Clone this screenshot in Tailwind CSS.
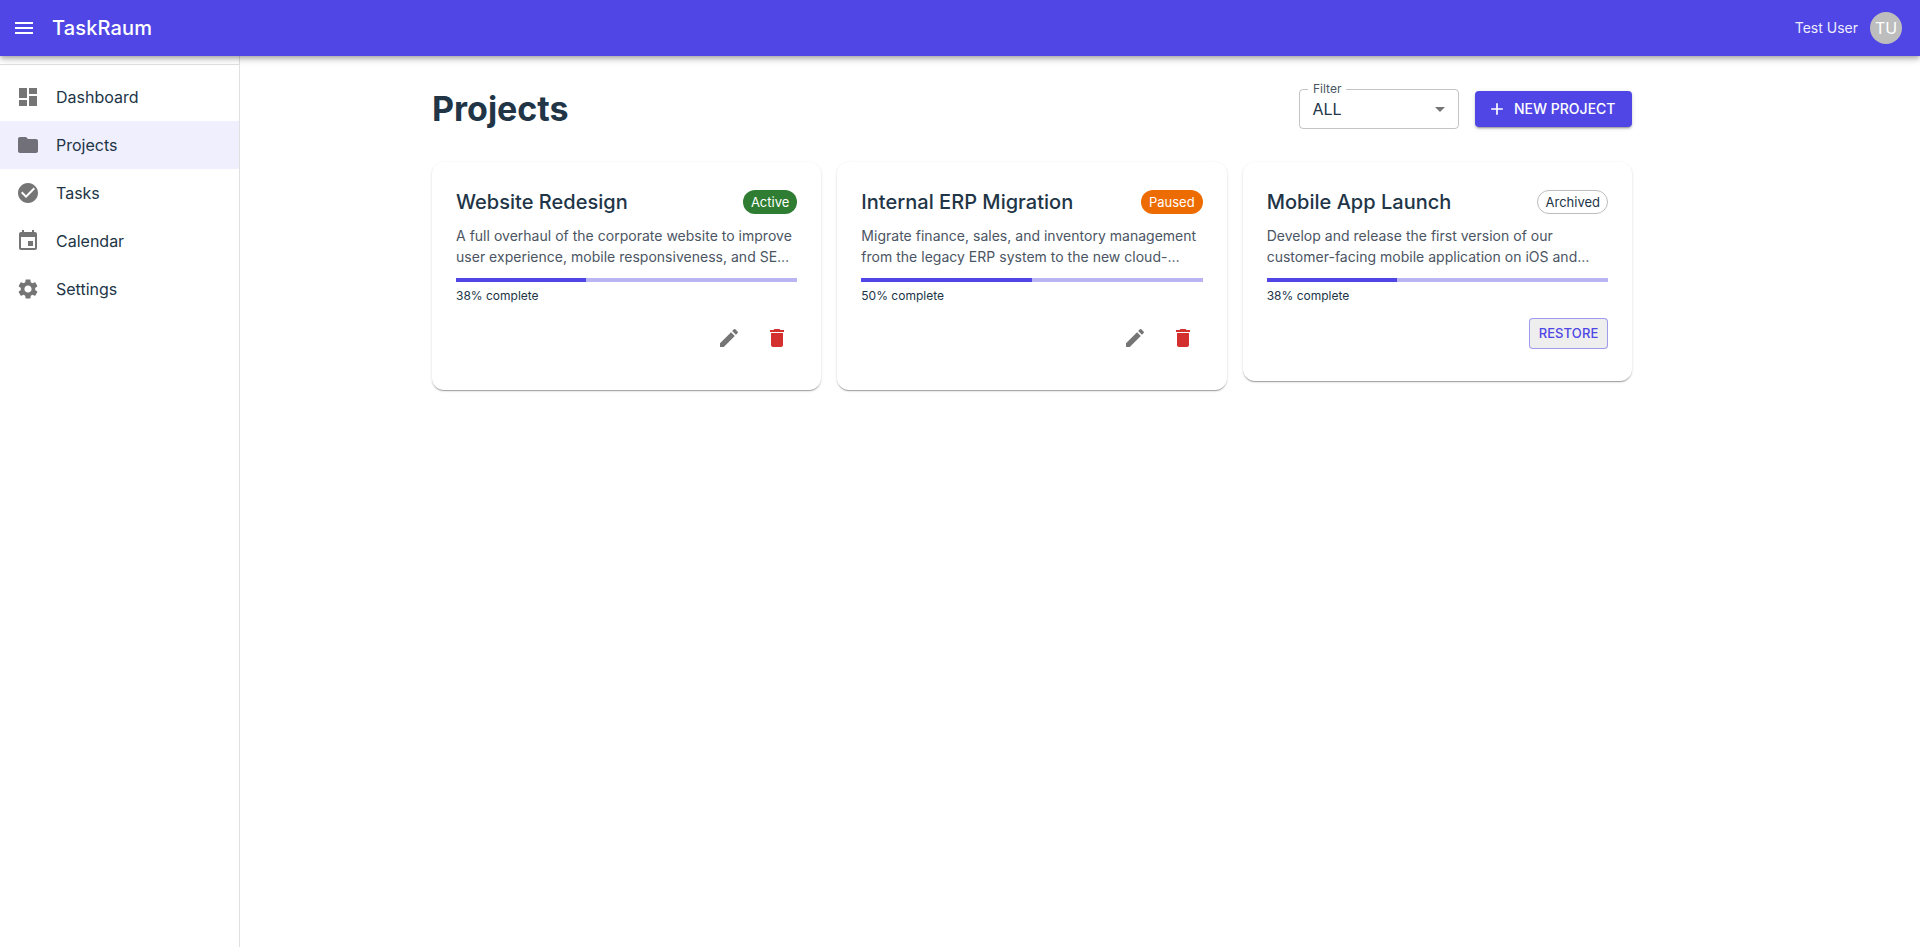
<!DOCTYPE html>
<html lang="en">
<head>
<meta charset="utf-8">
<title>TaskRaum</title>
<script src="https://cdn.jsdelivr.net/npm/@tailwindcss/browser@4"></script>
</head>
<body class="h-screen flex flex-col overflow-hidden bg-white text-[#213547] font-['Inter',sans-serif] antialiased">
<header class="relative z-10 flex h-14 shrink-0 items-center bg-[#4f46e5] pl-3 pr-[18px] text-white shadow-[0px_2px_4px_-1px_rgba(0,0,0,0.2),0px_4px_5px_0px_rgba(0,0,0,0.14),0px_1px_10px_0px_rgba(0,0,0,0.12)]">
  <button aria-label="Menu"><svg class="size-6 fill-current" viewBox="0 0 24 24"><path d="M3 18h18v-2H3zm0-5h18v-2H3zm0-7v2h18V6z"/></svg></button>
  <div class="ml-4 grow text-xl font-medium tracking-[0.15px]">TaskRaum</div>
  <span class="mr-3 text-sm opacity-90">Test User</span>
  <span class="flex size-8 items-center justify-center rounded-full bg-[#bdbdbd] text-base">TU</span>
</header>
<div class="flex grow">
  <nav class="w-60 shrink-0 border-r border-black/12 pt-2">
    <ul class="border-t border-black/12 pt-2 text-base">
      <li class="flex h-12 items-center gap-4 px-4"><svg class="size-6 fill-[#757575]" viewBox="0 0 24 24"><path d="M3 13h8V3H3zm0 8h8v-6H3zm10 0h8V11h-8zm0-18v6h8V3z"/></svg>Dashboard</li>
      <li class="flex h-12 items-center gap-4 bg-[#f0effd] px-4"><svg class="size-6 fill-[#716f77]" viewBox="0 0 24 24"><path d="M10 4H4c-1.1 0-1.99.9-1.99 2L2 18c0 1.1.9 2 2 2h16c1.1 0 2-.9 2-2V8c0-1.1-.9-2-2-2h-8z"/></svg>Projects</li>
      <li class="flex h-12 items-center gap-4 px-4"><svg class="size-6 fill-[#757575]" viewBox="0 0 24 24"><path d="M12 2C6.48 2 2 6.48 2 12s4.48 10 10 10 10-4.48 10-10S17.52 2 12 2m-2 15-5-5 1.41-1.41L10 14.17l7.59-7.59L19 8z"/></svg>Tasks</li>
      <li class="flex h-12 items-center gap-4 px-4"><svg class="size-6 fill-[#757575]" viewBox="0 0 24 24"><path d="M17 12h-5v5h5zM16 1v2H8V1H6v2H5c-1.11 0-1.99.9-1.99 2L3 19c0 1.1.89 2 2 2h14c1.1 0 2-.9 2-2V5c0-1.1-.9-2-2-2h-1V1zm3 18H5V8h14z"/></svg>Calendar</li>
      <li class="flex h-12 items-center gap-4 px-4"><svg class="size-6 fill-[#757575]" viewBox="0 0 24 24"><path d="M19.14 12.94c.04-.3.06-.61.06-.94 0-.32-.02-.64-.07-.94l2.03-1.58c.18-.14.23-.41.12-.61l-1.92-3.32c-.12-.22-.37-.29-.59-.22l-2.39.96c-.5-.38-1.03-.7-1.62-.94l-.36-2.54c-.04-.24-.24-.41-.48-.41h-3.84c-.24 0-.43.17-.47.41l-.36 2.54c-.59.24-1.13.57-1.62.94l-2.39-.96c-.22-.08-.47 0-.59.22L2.74 8.87c-.12.21-.08.47.12.61l2.03 1.58c-.05.3-.09.63-.09.94s.02.64.07.94l-2.03 1.58c-.18.14-.23.41-.12.61l1.92 3.32c.12.22.37.29.59.22l2.39-.96c.5.38 1.03.7 1.62.94l.36 2.54c.05.24.24.41.48.41h3.84c.24 0 .44-.17.47-.41l.36-2.54c.59-.24 1.13-.56 1.62-.94l2.39.96c.22.08.47 0 .59-.22l1.92-3.32c.12-.22.07-.47-.12-.61zM12 15.6c-1.98 0-3.6-1.62-3.6-3.6s1.62-3.6 3.6-3.6 3.6 1.62 3.6 3.6-1.62 3.6-3.6 3.6"/></svg>Settings</li>
    </ul>
  </nav>
  <main class="grow pl-48 pt-8">
    <div class="w-[1200px]">
      <div class="mb-8 flex h-[42px] items-center gap-4">
        <h1 class="grow text-[34px] leading-[42px] font-bold">Projects</h1>
        <div class="relative flex h-10 w-40 items-center justify-between rounded border border-black/23 pl-[12.5px] pr-1.5 text-base">
          <span class="absolute -top-[9px] left-2 bg-white px-[5px] text-xs leading-4 text-[#4b5563]">Filter</span>
          ALL
          <svg class="size-6 fill-[#757575]" viewBox="0 0 24 24"><path d="m7 10 5 5 5-5z"/></svg>
        </div>
        <button class="flex h-9 w-[157px] items-center gap-[7px] rounded bg-[#4f46e5] pl-3 text-sm font-medium whitespace-nowrap text-white shadow-[0px_3px_1px_-2px_rgba(0,0,0,0.2),0px_2px_2px_0px_rgba(0,0,0,0.14),0px_1px_5px_0px_rgba(0,0,0,0.12)]"><svg class="size-5 fill-current" viewBox="0 0 24 24"><path d="M19 13h-6v6h-2v-6H5v-2h6V5h2v6h6z"/></svg>NEW PROJECT</button>
      </div>
      <div class="grid grid-cols-3 items-start gap-4">
        <article class="rounded-xl px-6 pt-6 pb-8 shadow-[0px_2px_1px_-1px_rgba(0,0,0,0.2),0px_1px_1px_0px_rgba(0,0,0,0.14),0px_1px_3px_0px_rgba(0,0,0,0.12)]">
          <div class="flex h-8 items-center justify-between"><h2 class="text-xl font-medium tracking-[0.02px]">Website Redesign</h2><span class="flex h-6 items-center rounded-full bg-[#2e7d32] px-2 pt-px text-[13px] text-white">Active</span></div>
          <p class="mt-[7px] text-sm leading-[21px] tracking-[0.015px] whitespace-nowrap text-[#4b5563]">A full overhaul of the corporate website to improve<br>user experience, mobile responsiveness, and SE…</p>
          <div class="mt-[11px] h-1 bg-[#b9b5f5]"><div class="h-1 bg-[#4f46e5]" style="width:38%"></div></div>
          <div class="mt-1 text-xs leading-5">38% complete</div>
          <div class="mt-3 flex justify-end gap-2">
            <button aria-label="Edit" class="p-2"><svg class="size-6 fill-[#757575]" viewBox="0 0 24 24"><path d="M3 17.25V21h3.75L17.81 9.94l-3.75-3.75zM20.71 7.04c.39-.39.39-1.02 0-1.41l-2.34-2.34a.996.996 0 0 0-1.41 0l-1.83 1.83 3.75 3.75z"/></svg></button>
            <button aria-label="Delete" class="p-2"><svg class="size-6 fill-[#d32f2f]" viewBox="0 0 24 24"><path d="M6 19c0 1.1.9 2 2 2h8c1.1 0 2-.9 2-2V7H6zM19 4h-3.5l-1-1h-5l-1 1H5v2h14z"/></svg></button>
          </div>
        </article>
        <article class="rounded-xl px-6 pt-6 pb-8 shadow-[0px_2px_1px_-1px_rgba(0,0,0,0.2),0px_1px_1px_0px_rgba(0,0,0,0.14),0px_1px_3px_0px_rgba(0,0,0,0.12)]">
          <div class="flex h-8 items-center justify-between"><h2 class="text-xl font-medium tracking-[0.02px]">Internal ERP Migration</h2><span class="flex h-6 items-center rounded-full bg-[#ed6c02] px-2 pt-px text-[13px] text-white">Paused</span></div>
          <p class="mt-[7px] text-sm leading-[21px] tracking-[0.015px] whitespace-nowrap text-[#4b5563]">Migrate finance, sales, and inventory management<br>from the legacy ERP system to the new cloud-…</p>
          <div class="mt-[11px] h-1 bg-[#b9b5f5]"><div class="h-1 bg-[#4f46e5]" style="width:50%"></div></div>
          <div class="mt-1 text-xs leading-5">50% complete</div>
          <div class="mt-3 flex justify-end gap-2">
            <button aria-label="Edit" class="p-2"><svg class="size-6 fill-[#757575]" viewBox="0 0 24 24"><path d="M3 17.25V21h3.75L17.81 9.94l-3.75-3.75zM20.71 7.04c.39-.39.39-1.02 0-1.41l-2.34-2.34a.996.996 0 0 0-1.41 0l-1.83 1.83 3.75 3.75z"/></svg></button>
            <button aria-label="Delete" class="p-2"><svg class="size-6 fill-[#d32f2f]" viewBox="0 0 24 24"><path d="M6 19c0 1.1.9 2 2 2h8c1.1 0 2-.9 2-2V7H6zM19 4h-3.5l-1-1h-5l-1 1H5v2h14z"/></svg></button>
          </div>
        </article>
        <article class="rounded-xl px-6 pt-6 pb-8 shadow-[0px_2px_1px_-1px_rgba(0,0,0,0.2),0px_1px_1px_0px_rgba(0,0,0,0.14),0px_1px_3px_0px_rgba(0,0,0,0.12)]">
          <div class="flex h-8 items-center justify-between"><h2 class="text-xl font-medium tracking-[0.02px]">Mobile App Launch</h2><span class="flex h-6 items-center rounded-full border border-[#bdbdbd] px-[7px] pt-px text-[13px]">Archived</span></div>
          <p class="mt-[7px] text-sm leading-[21px] tracking-[0.015px] whitespace-nowrap text-[#4b5563]">Develop and release the first version of our<br>customer-facing mobile application on iOS and…</p>
          <div class="mt-[11px] h-1 bg-[#b9b5f5]"><div class="h-1 bg-[#4f46e5]" style="width:38.1%"></div></div>
          <div class="mt-1 text-xs leading-5">38% complete</div>
          <div class="mt-3 flex justify-end"><button class="h-[31px] w-[79px] rounded border border-[#4f46e5]/50 bg-[#eeeeee] text-[13px] font-medium tracking-[0.1px] text-[#4f46e5]">RESTORE</button></div>
        </article>
      </div>
    </div>
  </main>
</div>
</body>
</html>
